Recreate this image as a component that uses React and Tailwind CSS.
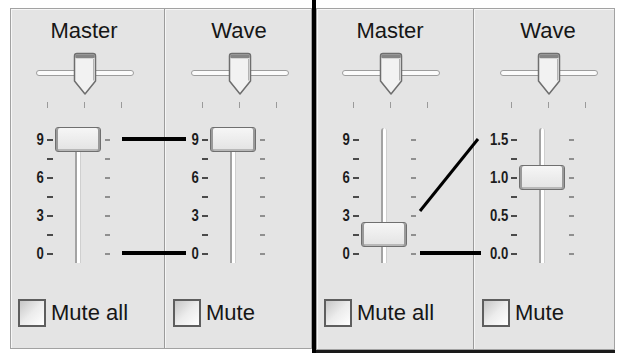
import React from 'react';

const ROWS = [0, 1, 2, 3, 4, 5, 6];

function BalanceSlider() {
  return (
    <svg width="98" height="44" viewBox="0 0 98 44" className="ml-[25px] block">
      <rect x="0.5" y="18.5" width="97" height="5" rx="2.5" fill="#fbfbfb" stroke="#9d9d9d" />
      <path
        d="M38.5,4 Q38.5,1.5 41,1.5 L57,1.5 Q59.5,1.5 59.5,4 L59.5,29 L49,42 L38.5,29 Z"
        fill="#f2f2f2"
        stroke="#6e6e6e"
        strokeWidth="1.5"
        strokeLinejoin="round"
      />
      <rect x="39.2" y="2.2" width="19.6" height="4" rx="1.5" fill="#858585" />
      <line x1="57.5" y1="7" x2="57.5" y2="28.5" stroke="#b4b4b4" />
    </svg>
  );
}

function VolumeSlider({ labels, thumbRow, trackTop }) {
  return (
    <div className="relative flex w-[146px] h-[136px] mt-[19px]">
      <div className="w-[33px] pt-[3px] flex flex-col items-end">
        {ROWS.map((r) => (
          <div
            key={r}
            className="h-[19px] flex items-center text-[16px] font-bold leading-none text-[#1c1c1c] scale-x-[0.82] origin-right"
          >
            {labels[r]}
          </div>
        ))}
      </div>
      <div className="ml-[3px] w-[6px] pt-[3px] flex flex-col">
        {ROWS.map((r) => (
          <div key={r} className="h-[19px] flex items-center">
            <div className="w-[6px] h-[2px] bg-[#4a4a4a]" />
          </div>
        ))}
      </div>
      <div className={`w-[50px] flex justify-center ${trackTop ? 'pt-px' : ''}`}>
        <div className="w-[6px] h-full rounded-t-full border-l-2 border-l-[#a3a3a3] border-r border-r-[#cfcfcf] bg-white" />
      </div>
      <div className="ml-[2px] w-[6px] pt-[3px] flex flex-col">
        {ROWS.map((r) => (
          <div key={r} className="h-[19px] flex items-center">
            <div className="w-[5px] h-[2px] bg-[#8f8f8f]" />
          </div>
        ))}
      </div>
      <div
        className="absolute left-[44px] w-[46px] h-[25px] rounded-[3px] border border-[#6f6f6f] bg-linear-to-b from-[#f6f6f6] to-[#e3e3e3] shadow-[inset_2px_0_0_#9a9a9a,inset_-2px_0_0_#9a9a9a,inset_0_-2px_0_#b8b8b8]"
        style={{ top: thumbRow * 19 }}
      />
    </div>
  );
}

function Channel({ title, labels, thumbRow, muteLabel, className }) {
  return (
    <div className={`flex flex-col ${className}`}>
      <div className="w-[146px] shrink-0 flex flex-col">
        <div className="mt-[9px] h-[26px] leading-[26px] text-[22px] text-center text-[#161616]">{title}</div>
        <div className="mt-[8px] h-[44px]">
          <BalanceSlider />
        </div>
        <div className="mt-[6px] h-[6px] flex justify-center gap-[36px]">
          <div className="w-px h-[6px] bg-[#9a9a9a]" />
          <div className="w-px h-[6px] bg-[#9a9a9a]" />
          <div className="w-px h-[6px] bg-[#9a9a9a]" />
        </div>
        <VolumeSlider labels={labels} thumbRow={thumbRow} trackTop={thumbRow > 0} />
        <div className="mt-[36px] h-[28px] pl-[7px] flex items-center gap-[5px]">
          <div className="w-[28px] h-[28px] border-2 border-[#5e5e5e] bg-linear-to-br from-[#c6c6c6] via-[#ececec] to-white" />
          <span className="text-[22px] leading-none text-[#161616]">{muteLabel}</span>
        </div>
      </div>
    </div>
  );
}

function Divider() {
  return <div className="w-[2px] shrink-0 border-l border-l-[#9b9b9b] border-r border-r-[#f5f5f5]" />;
}

const NUM = ['9', '', '6', '', '3', '', '0'];
const GAIN = ['1.5', '', '1.0', '', '0.5', '', '0.0'];

export default function App() {
  return (
    <div className="relative w-[620px] h-[353px] bg-white flex overflow-hidden font-['Liberation_Sans',Arial,sans-serif]">
      <div className="w-[10px] shrink-0" />
      <div className="w-[302px] shrink-0 mt-[8px] h-[341px] flex border border-[#a2a2a2] bg-[#e4e4e4] shadow-[inset_1px_1px_0_#f7f7f7]">
        <Channel title="Master" labels={NUM} thumbRow={0} muteLabel="Mute all" className="w-[153px] shrink-0" />
        <Divider />
        <Channel title="Wave" labels={NUM} thumbRow={0} muteLabel="Mute" className="flex-1 overflow-hidden" />
      </div>
      <div className="w-[4px] shrink-0 h-full bg-black" />
      <div className="w-[299px] shrink-0 mt-[8px] flex flex-col">
        <div className="h-[342px] flex border border-[#a2a2a2] bg-[#e4e4e4] shadow-[inset_1px_1px_0_#f7f7f7]">
          <Channel title="Master" labels={NUM} thumbRow={5} muteLabel="Mute all" className="w-[156px] shrink-0" />
          <Divider />
          <Channel title="Wave" labels={GAIN} thumbRow={2} muteLabel="Mute" className="flex-1 overflow-hidden" />
        </div>
        <div className="h-[3px] bg-[#1a1a1a]" />
      </div>

      <svg className="absolute left-0 top-0 pointer-events-none" width="620" height="353" viewBox="0 0 620 353">
        <line x1="122" y1="139" x2="186" y2="139" stroke="#000" strokeWidth="4" />
        <line x1="122" y1="253" x2="186" y2="253" stroke="#000" strokeWidth="4" />
        <line x1="420" y1="211" x2="478" y2="139" stroke="#000" strokeWidth="3" />
        <line x1="420" y1="253" x2="481" y2="253" stroke="#000" strokeWidth="4" />
      </svg>
    </div>
  );
}
